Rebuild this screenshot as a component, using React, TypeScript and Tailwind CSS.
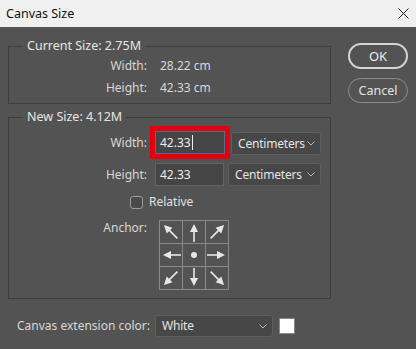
import React from "react";

type Dir = "nw" | "n" | "ne" | "w" | "c" | "e" | "sw" | "s" | "se";

const angles: Record<string, number> = {
  n: 0,
  ne: 45,
  e: 90,
  se: 135,
  s: 180,
  sw: 225,
  w: 270,
  nw: 315,
};

function AnchorCell({ dir }: { dir: Dir }) {
  if (dir === "c") {
    return (
      <svg width="22" height="22" viewBox="0 0 22 22">
        <circle cx="11" cy="11" r="3" fill="#e8e8e8" />
      </svg>
    );
  }
  const diag = dir.length === 2;
  // arrow drawn pointing up, tail toward the center cell
  const tail = diag ? 20 : 21;
  const tip = diag ? 1 : 3;
  return (
    <svg width="22" height="22" viewBox="0 0 22 22">
      <g transform={`rotate(${angles[dir]} 11 11)`}>
        <line x1="11" y1={tail} x2="11" y2={tip + 6} stroke="#e8e8e8" strokeWidth="1.6" />
        <polygon points={`11,${tip} 7,${tip + 8} 15,${tip + 8}`} fill="#e8e8e8" />
      </g>
    </svg>
  );
}

function Chevron() {
  return (
    <svg width="8" height="5" viewBox="0 0 8 5" className="shrink-0">
      <path d="M0.5 0.5 L4 4 L7.5 0.5" fill="none" stroke="#b4b4b4" strokeWidth="1" />
    </svg>
  );
}

function Select({ value, className }: { value: string; className: string }) {
  return (
    <div
      className={`flex items-center justify-between rounded-[3px] border border-[#5e5e5e] bg-[#474747] pl-[6px] pr-[5px] text-[#e4e4e4] whitespace-nowrap ${className}`}
    >
      <span className="tracking-[-0.2px]">{value}</span>
      <Chevron />
    </div>
  );
}

export default function App() {
  const cells: Dir[] = ["nw", "n", "ne", "w", "c", "e", "sw", "s", "se"];

  return (
    <div className="w-[416px] h-[349px] bg-[#535353] font-['Noto_Sans',sans-serif] text-[12px] leading-[16px] text-[#d8d8d8] overflow-hidden">
      {/* title bar */}
      <div className="h-[27px] bg-[#f0f0f0] flex items-center justify-between pl-[6px] pr-[7px] text-[#111] text-[12.5px]">
        <span>Canvas Size</span>
        <svg width="11" height="11" viewBox="0 0 11 11">
          <path d="M0.5 0.5 L10.5 10.5 M10.5 0.5 L0.5 10.5" stroke="#222" strokeWidth="1" />
        </svg>
      </div>

      <div className="flex">
        <div className="ml-[8px] w-[323px] flex flex-col">
          {/* current size */}
          <fieldset className="mt-[11px] border border-[#3e3e3e] pt-[1px] pb-[4px]">
            <legend className="ml-[14px] px-[4px] leading-[16px] text-[12.5px] text-[#e6e6e6]">Current Size: 2.75M</legend>
            <div className="flex h-[22px] items-center">
              <span className="w-[138px] text-right">Width:</span>
              <span className="ml-[13px]">28.22 cm</span>
            </div>
            <div className="flex h-[22px] items-center">
              <span className="w-[138px] text-right">Height:</span>
              <span className="ml-[13px]">42.33 cm</span>
            </div>
          </fieldset>

          {/* new size */}
          <fieldset className="mt-[5px] border border-[#3e3e3e] pt-[6px] pb-[8px]">
            <legend className="ml-[14px] px-[4px] leading-[16px] text-[12.5px] text-[#e6e6e6]">New Size: 4.12M</legend>
            <div className="flex h-[23px] items-center">
              <span className="w-[138px] text-right">Width:</span>
              <div className="ml-[8px] w-[70px] h-[23px] border border-[#4d6e96] bg-[#454545] pl-[4px] flex items-center text-[#ececec] ring-[5px] ring-[#e3000b]">
                42.33<span className="ml-[1px] inline-block w-px h-[15px] bg-[#eee]" />
              </div>
              <Select value="Centimeters" className="ml-[6px] w-[90px] h-[23px] mt-[2px]" />
            </div>
            <div className="flex h-[23px] items-center mt-[9px]">
              <span className="w-[138px] text-right">Height:</span>
              <div className="ml-[8px] w-[69px] h-[23px] border border-[#626262] bg-[#454545] pl-[4px] flex items-center text-[#ececec]">
                42.33
              </div>
              <Select value="Centimeters" className="ml-[4px] w-[93px] h-[23px]" />
            </div>
            <div className="flex h-[14px] items-center mt-[9px] pl-[121px]">
              <span className="w-[13px] h-[13px] rounded-[3px] border border-[#9a9a9a] bg-[#4a4a4a]" />
              <span className="ml-[6px] text-[#e0e0e0]">Relative</span>
            </div>
            <div className="flex items-start mt-[11px]">
              <span className="w-[138px] text-right">Anchor:</span>
              <div className="ml-[12px] grid grid-cols-3 border-l border-t border-[#8a8a8a]">
                {cells.map((d) => (
                  <div key={d} className="w-[23px] h-[23px] border-r border-b border-[#8a8a8a]">
                    <AnchorCell dir={d} />
                  </div>
                ))}
              </div>
            </div>
          </fieldset>

          {/* extension color */}
          <div className="flex items-center mt-[16px] pl-[9px]">
            <span className="w-[138px] whitespace-nowrap">Canvas extension color:</span>
            <Select value="White" className="w-[118px] h-[22px]" />
            <span className="ml-[6px] w-[16px] h-[16px] bg-white border border-[#888]" />
          </div>
        </div>

        {/* buttons */}
        <div className="ml-[17px] mt-[16px] flex flex-col">
          <button className="w-[60px] h-[26px] rounded-full border-2 border-[#d4d4d4] text-[13px] text-[#ececec] flex items-center justify-center">
            OK
          </button>
          <button className="mt-[9px] w-[60px] h-[25px] rounded-full border border-[#8c8c8c] text-[12.5px] text-[#e4e4e4] flex items-center justify-center">
            Cancel
          </button>
        </div>
      </div>
    </div>
  );
}
